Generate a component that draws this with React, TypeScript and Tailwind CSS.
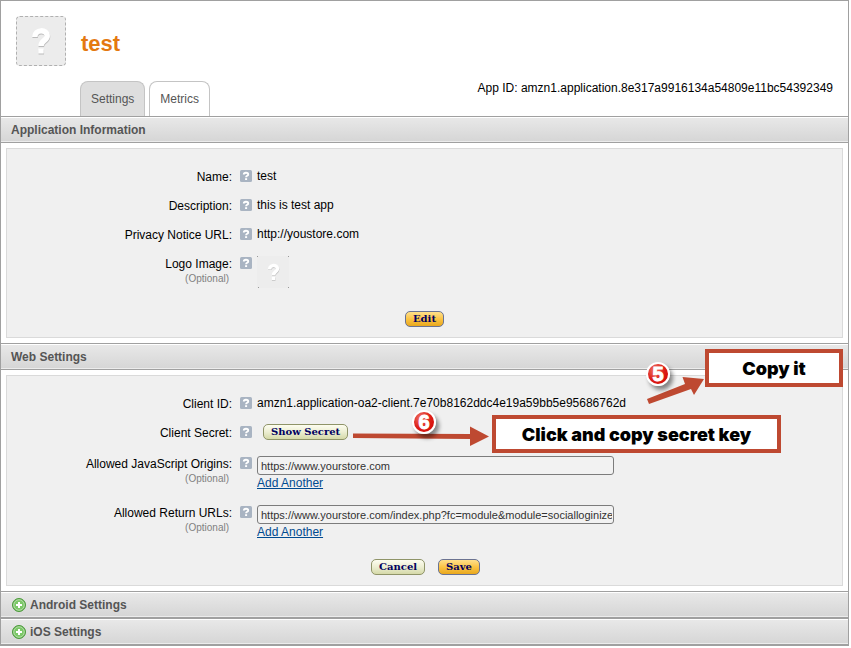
import type { ReactNode } from "react";

function SectionBar({ children }: { children: ReactNode }) {
  return (
    <div className="border-y border-[#a0a0a0]">
      <div className="flex h-[25px] items-center border-t border-b border-t-white border-b-[#ececec] bg-linear-to-b from-[#e8e8e8] to-[#d6d6d6] px-[10px] text-[12px] font-bold text-[#555]">
        {children}
      </div>
    </div>
  );
}

function CollapsedSection({ title }: { title: string }) {
  return (
    <SectionBar>
      <button type="button" className="flex items-center gap-1 pl-px">
        <svg viewBox="0 0 14 14" className="h-[14px] w-[14px]" aria-hidden="true">
          <circle cx="7" cy="7" r="6.5" fill="#63b04f" stroke="#4c9a3c" />
          <circle cx="7" cy="7" r="5.3" fill="#7cc868" stroke="#c9e8c0" strokeWidth="0.8" />
          <path d="M7 4v6M4 7h6" stroke="#fff" strokeWidth="2" />
        </svg>
        {title}
      </button>
    </SectionBar>
  );
}

function Panel({ children }: { children: ReactNode }) {
  return (
    <div className="p-[5px]">
      <div className="border border-[#dadada] bg-[#f0f0f0] pt-[18px] pb-[10px]">{children}</div>
    </div>
  );
}

function HelpIcon() {
  return (
    <svg viewBox="0 0 12 12" className="mt-[3px] mr-[5px] ml-2 h-3 w-3 shrink-0" aria-hidden="true">
      <rect width="12" height="12" rx="1.5" fill="#a9b4c2" />
      <path d="M3.8 4.6C3.8 2.2 8.2 2.2 8.2 4.4C8.2 5.8 6.1 5.7 6.1 7.2" fill="none" stroke="#fff" strokeWidth="1.9" />
      <rect x="5.1" y="8.2" width="2" height="1.8" fill="#fff" />
    </svg>
  );
}

function QuestionMark({ className }: { className: string }) {
  return (
    <svg viewBox="0 0 20 28" className={className} aria-hidden="true">
      <g fill="none" stroke="#bbb" strokeWidth="5.5" transform="translate(0.3 1)">
        <path d="M3.8 10C3.8 2 16.2 2 16.2 9C16.2 13.5 10 13.5 10 19" />
        <path d="M10 21.5v5" />
      </g>
      <g fill="none" stroke="#fff" strokeWidth="5.5">
        <path d="M3.8 10C3.8 2 16.2 2 16.2 9C16.2 13.5 10 13.5 10 19" />
        <path d="M10 21.500v5" />
      </g>
    </svg>
  );
}

function LogoThumbnail() {
  return (
    <div className="relative mt-px flex h-8 w-8 items-center justify-center bg-[#ededed]">
      <svg viewBox="0 0 32 32" className="absolute inset-0 h-8 w-8" aria-hidden="true">
        <path d="M0 0h1v1H0zM31 0h1v1h-1zM1 31h1v1H1zM31 31h1v1h-1z" fill="#999" />
      </svg>
      <QuestionMark className="h-[18px] w-[13px]" />
    </div>
  );
}

type RowProps = {
  label: string;
  optional?: boolean;
  htmlFor?: string;
  height: string;
  children: ReactNode;
};

function Row({ label, optional, htmlFor, height, children }: RowProps) {
  return (
    <div className={`flex items-start leading-4 ${height}`}>
      <div className="w-[225px] shrink-0 pt-[2px] text-right">
        {htmlFor ? <label htmlFor={htmlFor}>{label}:</label> : <span>{label}:</span>}
        {optional && (
          <div className="pr-[3px] text-[10px] leading-[14px] text-[#808080]">(Optional)</div>
        )}
      </div>
      <HelpIcon />
      <div className="min-w-0 pt-px">{children}</div>
    </div>
  );
}

function PillButton({ tone, children }: { tone: "gold" | "pale"; children: ReactNode }) {
  const colors =
    tone === "gold"
      ? "border-[#6b7391] from-[#ffe08a] via-[#fbc443] to-[#e9a81c]"
      : "border-[#8f9468] from-[#fdfdf0] via-[#eceed2] to-[#d5d9a8]";
  return (
    <button
      type="button"
      className={`h-4 rounded-[5px] border bg-linear-to-b px-[7px] font-['DejaVu_Serif',serif] text-[10px] leading-[14px] font-bold text-[#000060] ${colors}`}
    >
      {children}
    </button>
  );
}

function UrlField({ id, value }: { id: string; value: string }) {
  return (
    <>
      <input
        id={id}
        type="text"
        defaultValue={value}
        className="my-px block h-[19px] w-[357px] rounded-[3px] border border-[#7c7c7c] bg-[#f2f2f2] pr-px pl-[3px] text-[11px] leading-4 text-[#333]"
      />
      <a href="#add" className="block leading-[14px] text-[#004b91] underline">
        Add Another
      </a>
    </>
  );
}

function Badge({ place, children }: { place: string; children: ReactNode }) {
  return (
    <div
      className={`absolute flex h-6 w-6 items-center justify-center rounded-full border-2 border-white bg-radial-[at_35%_30%] from-[#f0776a] via-[#dd2018] to-[#d00000] text-[20px] leading-none font-bold text-white shadow-[3px_4px_4px_rgba(0,0,0,0.45)] [-webkit-text-stroke:1px_white] ${place}`}
    >
      {children}
    </div>
  );
}

function Callout({ place, children }: { place: string; children: ReactNode }) {
  return (
    <div
      className={`absolute flex h-[38px] items-center justify-center border-4 border-[#be4931] bg-white font-['Inter',sans-serif] text-[18px] font-black text-black ${place}`}
    >
      {children}
    </div>
  );
}

export default function App() {
  return (
    <main className="mr-[2px] border border-[#a0a0a0] bg-white font-['Liberation_Sans',Arial,sans-serif] text-[12px] text-black">
      <header className="pt-[15px]">
        <div className="flex items-center gap-[15px] pl-[15px]">
          <div className="flex h-[50px] w-[50px] items-center justify-center rounded-[4px] border border-dashed border-[#b0b0b0] bg-[#ececec]">
            <QuestionMark className="h-[28px] w-[20px]" />
          </div>
          <h1 className="pt-[6px] text-[22px] leading-7 font-bold text-[#e47911]">test</h1>
        </div>
        <div className="mt-[15px] flex items-start justify-between pr-[15px] pl-[79px]">
          <nav className="flex gap-1 text-[#555]">
            <button type="button" className="h-[35px] rounded-t-lg border border-b-0 border-[#c4c4c4] bg-[#dedede] px-[10px]">
              Settings
            </button>
            <button type="button" className="h-[35px] rounded-t-lg border border-b-0 border-[#c4c4c4] bg-white px-[10px]">
              Metrics
            </button>
          </nav>
          <p className="leading-[14px]">App ID: amzn1.application.8e317a9916134a54809e11bc54392349</p>
        </div>
      </header>

      <section>
        <SectionBar>
          <h2>Application Information</h2>
        </SectionBar>
        <Panel>
          <Row label="Name" height="h-[29px]">test</Row>
          <Row label="Description" height="h-[29px]">this is test app</Row>
          <Row label="Privacy Notice URL" height="h-[29px]">http://youstore.com</Row>
          <Row label="Logo Image" optional height="h-[57px]">
            <LogoThumbnail />
          </Row>
          <div className="flex justify-center">
            <PillButton tone="gold">Edit</PillButton>
          </div>
        </Panel>
      </section>

      <section className="relative">
        <SectionBar>
          <h2>Web Settings</h2>
        </SectionBar>
        <Panel>
          <Row label="Client ID" height="h-[29px]">
            amzn1.application-oa2-client.7e70b8162ddc4e19a59bb5e95686762d
          </Row>
          <Row label="Client Secret" height="h-[31px]">
            <div className="flex pl-[6px]">
              <PillButton tone="pale">Show Secret</PillButton>
            </div>
          </Row>
          <Row label="Allowed JavaScript Origins" optional htmlFor="origins" height="h-[49px]">
            <UrlField id="origins" value="https://www.yourstore.com" />
          </Row>
          <Row label="Allowed Return URLs" optional htmlFor="returns" height="h-[56px]">
            <UrlField
              id="returns"
              value="https://www.yourstore.com/index.php?fc=module&module=socialloginizer"
            />
          </Row>
          <div className="flex justify-center gap-[13px] pl-[2px]">
            <PillButton tone="pale">Cancel</PillButton>
            <PillButton tone="gold">Save</PillButton>
          </div>
        </Panel>

        <svg viewBox="0 0 64 32" className="absolute top-[32px] left-[643px] h-[32px] w-[64px]" aria-hidden="true">
          <path d="M3 24L41 9L38.500 2L60 4L50 20L47 14L5 29Z" fill="#be4931" />
        </svg>
        <svg viewBox="0 0 140 20" className="absolute top-[83px] left-[351px] h-[20px] w-[140px]" aria-hidden="true">
          <path d="M1 7.500L118 8V0.500L137 10.500L118 20V13L1 12Z" fill="#be4931" />
        </svg>
        <Badge place="top-[19px] left-[645px]">5</Badge>
        <Badge place="top-[67px] left-[411px]">6</Badge>
        <Callout place="top-[6px] left-[704px] w-[138px]">Copy it</Callout>
        <Callout place="top-[72px] left-[491px] w-[289px]">Click and copy secret key</Callout>
      </section>

      <CollapsedSection title="Android Settings" />
      <CollapsedSection title="iOS Settings" />
    </main>
  );
}
